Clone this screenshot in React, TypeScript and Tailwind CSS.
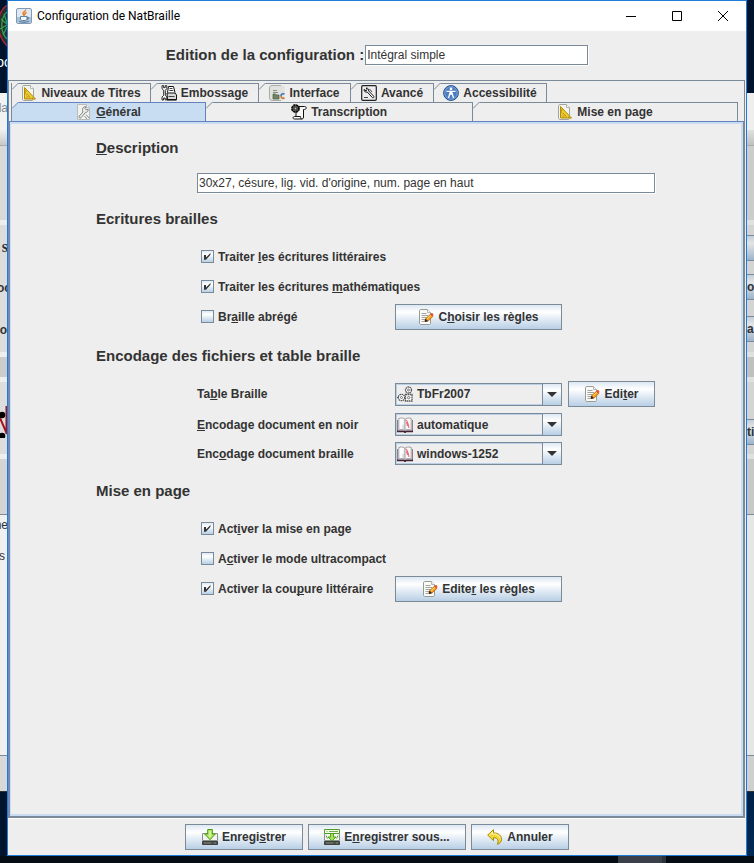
import React from 'react';

type IconProps = { children: React.ReactNode; size?: string };

function Icon({ children, size = 'size-4' }: IconProps) {
  return (
    <svg viewBox="0 0 16 16" className={`${size} shrink-0`} fill="none" aria-hidden="true">
      {children}
    </svg>
  );
}

const JavaIcon = () => (
  <Icon>
    <rect x="0.5" y="0.5" width="15" height="15" rx="1.5" fill="#dfe9f3" stroke="#7f9ab5" />
    <path d="M1 9h14v5.500H1z" fill="#a9c0d6" />
    <path d="M9.500 1.500c1 1.500-3 2.500-2.500 4 .3 1 1 1.300 1 2.500M10.500 4.500c-2 .8-2 1.500-1.300 2.500" stroke="#ee7a1c" strokeWidth="1.400" />
    <path d="M4.500 8.500h6.500v2.500c0 1-1 1.500-2 1.500H6.500c-1 0-2-.5-2-1.500z" fill="#f6f9fc" stroke="#40688f" strokeWidth="0.800" />
    <path d="M11 9.300c2.500-.5 2 1.800-.3 1.900M3 13.600c3 .9 7 .9 10 0" stroke="#40688f" strokeWidth="0.900" />
  </Icon>
);

const SetSquareIcon = () => (
  <Icon>
    <path d="M1.500 2c0-.8.500-1.500 1.500-1.500h6.500l3 3V14c0 1-.5 1.500-1.500 1.500H3c-1 0-1.500-.5-1.500-1.500z" fill="#f4f4ee" stroke="#a3a69d" />
    <path d="M9.500 .5v3h3" fill="#fff" stroke="#b5b7b0" />
    <path d="M3.500 2.500v11.500h11z" fill="#edcd30" stroke="#b48b08" />
    <path d="M6 9v2.700h2.800z" fill="#fff8d0" stroke="#b48b08" strokeWidth="0.800" />
    <path d="M4 6h1.500M4 8h1M6 13.700v-1M9 13.700v-1M11.500 13.700v-1" stroke="#8c6c07" strokeWidth="0.800" />
  </Icon>
);

const WrenchPageIcon = () => (
  <Icon>
    <path d="M1.500 .5h9l3 3v12h-12z" fill="#f1f1ee" stroke="#bbbcb8" />
    <path d="M10.500 .5v3h3" fill="#fff" stroke="#bbbcb8" />
    <path d="M6.500 5.500c0-2 2-3.300 3.800-2.700L9 4.500l1.200 1.400 2-.7c.3 1.800-1 3.300-2.700 3.200L5 13.700c-1 1-2.700-.3-1.800-1.600L7 8c-.4-.8-.5-1.500-.5-2.500z" fill="#eceeee" stroke="#717676" strokeWidth="0.900" />
    <path d="M10 10.500l3.500 4M8.500 12l2.500 3" stroke="#8a8d8c" />
  </Icon>
);

const PrinterIcon = () => (
  <Icon>
    <path d="M6.500 7.500l1-6h5l1.500 6" fill="#fff" stroke="#111" />
    <path d="M8.500 3.500h3M8.300 5.500h4" stroke="#111" strokeWidth="0.800" />
    <path d="M6 8h8l1.500 2v4.500h-9z" fill="#d8d8d8" stroke="#111" />
    <path d="M6 14.800h9.500" stroke="#111" strokeWidth="1.600" />
    <path d="M7.500 11.500h6" stroke="#333" strokeWidth="0.900" />
    <path d="M1 .7v3l1.700 1.600v5L1 12v3h1.600v-2h1.600v2h1.600v-3l-1.500-1.700v-5L5.800 3.700v-3H4.200v2H2.600v-2z" fill="#fff" stroke="#111" strokeWidth="0.900" />
  </Icon>
);

const InterfaceIcon = () => (
  <Icon>
    <rect x="0.5" y="0.500" width="15" height="15" rx="2.500" fill="#e0e2de" />
    <path d="M12 .5H3C1.500.5.500 1.500.500 3v10c0 1.500 1 2.500 2.500 2.500h9" stroke="#aaada7" />
    <path d="M4 5.500h4M4 7.500h5" stroke="#868b84" />
    <path d="M4 9h2.500l1 1h2.500v4H4z" fill="#728268" stroke="#56644d" strokeWidth="0.800" />
    <path d="M15.500 9c-2.500-1-3.500.5-3.500 2" stroke="#3c6dbb" strokeWidth="1.500" />
    <path d="M12 11c0 2.300 2 2.800 3.500 1.800" stroke="#d66a20" strokeWidth="1.500" />
  </Icon>
);

const AdvancedIcon = () => (
  <Icon>
    <rect x="0.700" y="0.700" width="14.600" height="14.600" rx="1" fill="#ededed" stroke="#222" strokeWidth="1.200" />
    <path d="M3 4.500c0 2.200 1.600 3 3.300 2.500l5 5.500c.8.9 2.200-.2 1.400-1.300L7.700 6c.3-1.700-.7-3-2.500-3l1 1.800-1 1z" fill="#fff" stroke="#111" strokeWidth="1" />
    <path d="M8.500 4l2.500 3M3 12.500h4" stroke="#444" />
  </Icon>
);

const AccessibilityIcon = () => (
  <Icon>
    <circle cx="8" cy="8" r="7.400" fill="#4b7ec1" stroke="#274f8c" />
    <circle cx="8" cy="8" r="6.300" stroke="#8eb1df" strokeWidth="0.700" />
    <circle cx="8" cy="3.900" r="1.300" fill="#fff" />
    <path d="M3.500 6.300h9M7 8l-1.500 5M9 8l1.500 5" stroke="#fff" strokeWidth="1.300" />
    <path d="M6.600 6.500h2.800v3.300H6.600z" fill="#fff" />
  </Icon>
);

const TranscriptionIcon = () => (
  <Icon>
    <path d="M6 2.500h7.500c2.500 0 2 3 0 3h-1v7.500c0 1.800-1 2-2 2H3.500c-2 0-1.800-2.500 0-2.500H5v-5" fill="#f7f7f7" stroke="#111" />
    <path d="M5 12.500h4.500c0 1.500.5 2.500 1.500 2.500" stroke="#111" />
    <circle cx="4.500" cy="4.500" r="3.300" fill="#8c8c86" stroke="#111" strokeWidth="2.200" strokeDasharray="2.200 .4" />
    <circle cx="4.500" cy="4.500" r="1.300" fill="#c2c2bc" stroke="#111" strokeWidth="0.800" />
  </Icon>
);

const EditIcon = () => (
  <Icon>
    <path d="M1.500 2c0-1 .5-1.500 1.500-1.500h6.500l3 3V14c0 1-.5 1.500-1.500 1.500H3c-1 0-1.500-.5-1.500-1.500z" fill="#fafaf8" stroke="#979b94" />
    <path d="M9.500.5v3h3" fill="#fff" stroke="#b3b5b0" />
    <path d="M3.500 4.500h5M3.500 6.500h6.500M3.500 8.500h5M3.500 10.500h3.500M3.500 12.500h3" stroke="#a1a49d" />
    <path d="M7 12.500l.8-3 4.700-4.300 2.300 2.300-4.700 4.500z" fill="#fba125" stroke="#b35c00" strokeWidth="0.800" />
    <path d="M12.200 5.300l1-1c1-.7 2.600.8 2 2l-1 1.200z" fill="#e95030" />
    <path d="M7 12.500l.6-2.300 1.800 1.700z" fill="#222" stroke="#222" strokeWidth="0.700" />
    <path d="M9 9.800l4-3.700" stroke="#ffe071" strokeWidth="0.900" />
  </Icon>
);

const CogsIcon = () => (
  <Icon>
    <g stroke="#555">
      <circle cx="11.500" cy="4" r="3" strokeDasharray="1.600 .5" strokeWidth="1.300" fill="#fff" />
      <circle cx="11.500" cy="4" r="1" strokeWidth="0.800" />
      <circle cx="4.500" cy="11.500" r="3.200" strokeDasharray="1.600 .5" strokeWidth="1.300" fill="#fff" />
      <circle cx="4.500" cy="11.500" r="1" strokeWidth="0.800" />
      <rect x="8.500" y="8.500" width="6.500" height="6.500" strokeDasharray="1.600 .5" strokeWidth="1.300" fill="#fff" />
      <circle cx="11.700" cy="11.700" r="1.200" strokeWidth="0.800" />
      <path d="M0 11.500h1.500" />
    </g>
  </Icon>
);

const BookIcon = () => (
  <Icon>
    <path d="M.5 3v11.500h6.500l1 1 1-1h6.500V3" fill="#f4f0f2" stroke="#8a7f8a" />
    <path d="M0 14.300h6.800l1.200.9 1.200-.9H16" stroke="#3f2438" strokeWidth="1.700" />
    <path d="M1.800 1.500c2.700-1 5.200-.5 6.200 1v11c-1.500-1.200-4.200-1.300-6.200-.5z" fill="#fff" stroke="#8f8890" strokeWidth="0.800" />
    <path d="M14.200 1.500c-2.700-1-5.200-.5-6.200 1v11c1.500-1.200 4.200-1.300 6.200-.5z" fill="#fbf8f8" stroke="#8f8890" strokeWidth="0.800" />
    <path d="M7.300 3.500v9M6 8v4" stroke="#c2bfc3" strokeWidth="0.900" />
    <path d="M8.700 3c2 1 2.700 4 3.200 8M9.500 5c.3 1.500.5 3 1.200 4" stroke="#e4707a" strokeWidth="1.100" />
  </Icon>
);

const DriveBase = () => (
  <>
    <path d="M.5 4.500h15v7H.5z" fill="#f3f4f1" stroke="#8c9088" />
    <path d="M.5 12.500h15v3H.5z" fill="#4d524d" stroke="#3c403c" />
    <path d="M2 14h7M12 14h2" stroke="#858a82" strokeWidth="0.900" />
  </>
);

const SaveIcon = () => (
  <Icon>
    <DriveBase />
    <path d="M5.700.5h4.600v4.500h3L8 10.700 2.700 5h3z" fill="#b4e866" stroke="#469b10" />
    <path d="M8 2v6" stroke="#e4f9c4" strokeWidth="1.200" />
  </Icon>
);

const SaveAsIcon = () => (
  <Icon>
    <DriveBase />
    <path d="M.5.500h15v4H.5z" fill="#f6fcf0" stroke="#4d9b22" />
    <path d="M2.500 2.500h1M5 2.500h9" stroke="#72a950" />
    <path d="M6.500 4.500h3v3.500h2.500L8 12 4 8h2.500z" fill="#a9e05c" stroke="#469b10" strokeWidth="0.900" />
    <path d="M2 6.500l1.500 3M14 6.500l-1.500 3" stroke="#5d9a3b" />
  </Icon>
);

const UndoIcon = () => (
  <Icon>
    <path d="M.7 6L6.500.7v3.200c5 0 8 2.800 8 6.300 0 2.600-1.700 4.500-4.200 5.100 1.600-2.900 1.200-6.600-3.800-6.600v3z" fill="#f1d93a" stroke="#a98a07" />
    <path d="M2.300 6l3.200-3v1.900c4 0 7 1.300 7.800 4.500" stroke="#fff8b8" strokeWidth="0.900" />
  </Icon>
);

/* Mnemonic: the letter after "_" is underlined. */
function Mn({ text }: { text: string }) {
  const i = text.indexOf('_');
  if (i < 0) return <span className="whitespace-nowrap">{text}</span>;
  return (
    <span className="whitespace-nowrap">
      {text.slice(0, i)}
      <span className="underline decoration-1 underline-offset-1 [text-decoration-skip-ink:none]">{text[i + 1]}</span>
      {text.slice(i + 2)}
    </span>
  );
}

function MetalButton({ icon, text, width }: { icon: React.ReactNode; text: string; width: string }) {
  return (
    <button
      type="button"
      className={`${width} flex h-[26px] items-center justify-center gap-1 border border-[#7a8a99] bg-linear-to-b from-[#dde8f3] via-white via-30% to-[#b8cfe5]`}
    >
      {icon}
      <Mn text={text} />
    </button>
  );
}

function Tab({ icon, text, width, selected = false }: { icon: React.ReactNode; text: string; width: string; selected?: boolean }) {
  return (
    <button
      type="button"
      role="tab"
      aria-selected={selected}
      className={`${width} relative flex h-[19px] items-center justify-center gap-1 border-t border-r ${
        selected ? 'border-[#6382bf] bg-[#c8ddf2]' : 'border-[#7a8a99]'
      }`}
    >
      <svg viewBox="0 0 7 7" className="absolute -top-px left-0 size-[7px]" aria-hidden="true">
        <path d="M0 0h7L0 7z" fill="#eeeeee" />
        <path d="M0 6.500L6.500 0" stroke={selected ? '#6382bf' : '#7a8a99'} fill="none" />
      </svg>
      {icon}
      <Mn text={text} />
    </button>
  );
}

function Check({ text, checked = false }: { text: string; checked?: boolean }) {
  return (
    <label className="flex h-[26px] items-center gap-1 pb-px pl-1">
      <span className="relative flex size-[13px] shrink-0">
        <input
          type="checkbox"
          defaultChecked={checked}
          className="peer size-[13px] appearance-none border border-[#7a8a99] bg-linear-to-b from-[#dde8f3] via-white via-30% to-[#b8cfe5]"
        />
        <svg viewBox="0 0 13 13" className="pointer-events-none absolute inset-0 hidden size-[13px] peer-checked:block" aria-hidden="true">
          <path d="M3 5h2v2.500L9.500 3v1.800L5 9.800H3z" fill="#333" />
        </svg>
      </span>
      <Mn text={text} />
    </label>
  );
}

function Combo({ id, icon, value }: { id: string; icon: React.ReactNode; value: string }) {
  return (
    <div className="flex h-[23px] border border-[#7a8a99]">
      <div className="flex flex-1 items-center gap-1 border-t border-b border-l border-[#b8cfe5]">
        {icon}
        <select id={id} defaultValue={value} className="h-full min-w-0 flex-1 appearance-none bg-transparent font-bold outline-none">
          <option>{value}</option>
        </select>
      </div>
      <span className="pointer-events-none flex w-[19px] items-center justify-center border-l border-[#7a8a99] bg-linear-to-b from-[#dde8f3] via-white via-30% to-[#b8cfe5]">
        <svg viewBox="0 0 10 5" className="h-[5px] w-[10px]" aria-hidden="true">
          <path d="M0 0h10L5 5z" fill="#333" />
        </svg>
      </span>
    </div>
  );
}

const Heading = ({ text }: { text: string }) => (
  <h2 className="text-[15px] leading-5">
    <Mn text={text} />
  </h2>
);

/* Narrow view of the windows that lie behind the dialog, on its left. */
function LeftStrip() {
  return (
    <div aria-hidden="true" className="flex w-[7px] shrink-0 flex-col overflow-hidden bg-[#00152d] font-normal">
      <div className="flex h-[93px] flex-col items-end">
        <svg viewBox="0 0 7 48" className="h-12 w-[7px]">
          <path d="M7 5C-3 12-6 32 7 46" fill="#2b2d30" stroke="#a32830" strokeWidth="1.500" />
          <path d="M7 12C0 18 0 32 7 39M1 19l6 5M0 29l7-4M4 14l3 9M3 35l4-8" fill="none" stroke="#2fa24a" strokeWidth="1.300" />
        </svg>
        <span className="-mr-1 mt-1 text-sm leading-5 text-white">oc</span>
      </div>
      <div className="flex h-[37px] items-center justify-end bg-[#f2f2f2] pb-2 text-[#888]"><span className="-mr-px">la</span></div>
      <div className="h-[16px] border-b border-[#aaa] bg-linear-to-b from-[#f0f0f0] to-[#c8c8c8]" />
      <div className="h-[74px] bg-[#d9d9d9]" />
      <div className="h-[5px] bg-[#eeeeee]" />
      <div className="flex h-[127px] flex-col items-end bg-[#dcdcdc] pt-3 font-bold">
        <span className="-mr-px h-[41px] font-['Liberation_Serif',serif] text-base leading-5">s</span>
        <span className="-mr-1 h-[42px] leading-5">oc</span>
        <span className="leading-5">o</span>
      </div>
      <div className="h-[5px] bg-[#eeeeee]" />
      <div className="h-[20px] bg-[#cccccc]" />
      <div className="h-[5px] bg-[#eeeeee]" />
      <div className="h-[72px] bg-[#dddddd] pt-6">
        <svg viewBox="0 0 7 32" className="h-8 w-[7px]">
          <path d="M0 12l7 16M6.500 0v28" stroke="#a51418" strokeWidth="2" />
          <circle cx="2" cy="9" r="3.300" fill="#000" />
          <circle cx="2" cy="30" r="3.300" fill="#000" />
        </svg>
      </div>
      <div className="h-[5px] bg-[#eeeeee]" />
      <div className="h-[56px] border-b border-[#7a8a99] bg-[#d4d4d4]" />
      <div className="flex h-[240px] flex-col items-end bg-[#f0f0f0]">
        <span className="-mr-px h-[31px] leading-5">ne</span>
        <span className="pr-0.5 leading-5">s</span>
      </div>
      <div className="h-[37px] border-t border-b border-t-[#7a8a99] border-b-[#333] bg-[#d8d8d8]" />
    </div>
  );
}

const SideButton = ({ text, gap }: { text: string; gap: string }) => (
  <div className={`${gap} flex h-[26px] shrink-0 items-center overflow-hidden border-t border-b border-[#7a8a99] bg-linear-to-b from-[#c4ced8] via-[#e4e4e4] via-30% to-[#9fb4c9]`}>
    {text}
  </div>
);

function RightStrip() {
  return (
    <div aria-hidden="true" className="flex w-[7px] shrink-0 flex-col overflow-hidden bg-linear-to-b from-[#00152d] from-80% to-[#002a55]">
      <div className="h-[93px]" />
      <div className="h-[37px] bg-[#eeeeee]" />
      <div className="h-[16px] border-b border-[#aaa] bg-linear-to-b from-[#e0e0e0] to-[#c0c0c0]" />
      <div className="h-[74px] bg-[#cccccc]" />
      <div className="h-[5px] bg-[#e0e0e0]" />
      <div className="h-[127px] bg-[#d4d4d4] pt-[10px]">
        <SideButton text="" gap="mt-0" />
        <SideButton text="o" gap="mt-[13px]" />
        <SideButton text="a" gap="mt-4" />
      </div>
      <div className="h-[5px] bg-[#e0e0e0]" />
      <div className="h-[20px] bg-[#c0c0c0]" />
      <div className="h-[5px] bg-[#e0e0e0]" />
      <div className="h-[72px] bg-[#d4d4d4] pt-[37px]">
        <SideButton text="ti" gap="mt-0" />
      </div>
      <div className="h-[5px] bg-[#e0e0e0]" />
      <div className="h-[56px] border-b border-[#7a8a99] bg-[#c8c8c8]" />
      <div className="h-[240px] bg-[#e6e6e6]" />
      <div className="h-[37px] border-t border-b border-t-[#7a8a99] border-b-[#333] bg-[#cfcfcf]" />
    </div>
  );
}

export default function App() {
  return (
    <div className="flex min-h-screen flex-col bg-[#060c14] font-['Liberation_Sans',Arial,sans-serif] text-xs font-bold text-[#333333]">
      <div className="flex flex-1">
        <LeftStrip />
        <main className="flex min-w-0 flex-1 flex-col border border-[#1c7cd6] bg-[#eeeeee]">
          <header className="flex h-[30px] items-center bg-white pl-2 text-black">
            <JavaIcon />
            <h1 className="flex-1 pl-[5px] font-[Roboto,sans-serif] text-xs font-normal">Configuration de NatBraille</h1>
            <button type="button" aria-label="Réduire" className="flex h-full w-[46px] items-center justify-center">
              <svg viewBox="0 0 10 10" className="size-[10px]"><path d="M0 5.500h10" stroke="#000" /></svg>
            </button>
            <button type="button" aria-label="Agrandir" className="flex h-full w-[46px] items-center justify-center">
              <svg viewBox="0 0 10 10" className="size-[10px]"><path d="M.5.500h9v9h-9z" fill="none" stroke="#000" /></svg>
            </button>
            <button type="button" aria-label="Fermer" className="flex h-full w-[46px] items-center justify-center">
              <svg viewBox="0 0 10 10" className="size-[10px]"><path d="M0 0l10 10M10 0L0 10" stroke="#000" /></svg>
            </button>
          </header>

          <div className="flex items-center justify-center gap-px pt-[14px] pb-[15px]">
            <label htmlFor="nom" className="text-[15px] leading-5">Edition de la configuration :</label>
            <input
              id="nom"
              defaultValue="Intégral simple"
              className="h-5 w-[223px] border border-[#7a8a99] bg-white px-px text-xs font-normal shadow-[1px_1px_0_#fff] outline-none"
            />
          </div>

          <div className="mr-px flex flex-1 flex-col border-b border-white">
            <div role="tablist" className="border-t border-r border-l border-[#7a8a99] pt-[2px] pr-[6px] pl-[2px]">
              <div className="flex border-l border-[#7a8a99]">
                <Tab icon={<SetSquareIcon />} text="Niveaux de Titres" width="w-[139px]" />
                <Tab icon={<PrinterIcon />} text="Embossage" width="w-[108px]" />
                <Tab icon={<InterfaceIcon />} text="Interface" width="w-[92px]" />
                <Tab icon={<AdvancedIcon />} text="Avancé" width="w-[83px]" />
                <Tab icon={<AccessibilityIcon />} text="Accessibilité" width="w-[113px]" />
              </div>
              <div className="flex border-l border-[#7a8a99]">
                <Tab icon={<WrenchPageIcon />} text="_Général" width="flex-[194]" selected />
                <Tab icon={<TranscriptionIcon />} text="Transcription" width="flex-[267]" />
                <Tab icon={<SetSquareIcon />} text="Mise en page" width="flex-[265]" />
              </div>
            </div>

            <div role="tabpanel" className="flex-1 border-t border-r-2 border-b-2 border-l-2 border-[#7a8a99] border-t-[#6382bf] border-l-[#6f8ab4]">
              <div className="h-full border-t-2 border-r-2 border-b-2 border-l border-[#c8ddf2] pt-[14px]">
                <div className="mx-auto max-w-[560px] pr-px">
                  <Heading text="_Description" />
                  <div className="mt-[15px] pl-[101px]">
                    <input
                      aria-label="Description"
                      defaultValue="30x27, césure, lig. vid. d'origine, num. page en haut"
                      className="block h-5 w-full border border-[#7a8a99] bg-white px-px text-xs font-normal shadow-[1px_1px_0_#fff] outline-none"
                    />
                  </div>

                  <div className="mt-4"><Heading text="Ecritures brailles" /></div>
                  <div className="mt-[15px] flex flex-col gap-1 pl-[101px]">
                    <Check text="Traiter _les écritures littéraires" checked />
                    <Check text="Traiter les écritures _mathématiques" checked />
                    <div className="grid grid-cols-[198px_167px]">
                      <Check text="Br_aille abrégé" />
                      <MetalButton icon={<EditIcon />} text="C_hoisir les règles" width="w-full" />
                    </div>
                  </div>

                  <div className="mt-4"><Heading text="Encodage des fichiers et table braille" /></div>
                  <div className="mt-[15px] flex flex-col gap-[6px] pl-[101px]">
                    <div className="grid grid-cols-[198px_167px_6px_87px] items-center">
                      <label htmlFor="table"><Mn text="Ta_ble Braille" /></label>
                      <Combo id="table" icon={<CogsIcon />} value="TbFr2007" />
                      <span />
                      <MetalButton icon={<EditIcon />} text="Edi_ter" width="w-full" />
                    </div>
                    <div className="grid grid-cols-[198px_167px] items-center">
                      <label htmlFor="noir"><Mn text="_Encodage document en noir" /></label>
                      <Combo id="noir" icon={<BookIcon />} value="automatique" />
                    </div>
                    <div className="grid grid-cols-[198px_167px] items-center">
                      <label htmlFor="braille"><Mn text="Enc_odage document braille" /></label>
                      <Combo id="braille" icon={<BookIcon />} value="windows-1252" />
                    </div>
                  </div>

                  <div className="mt-4"><Heading text="Mise en page" /></div>
                  <div className="mt-[15px] flex flex-col gap-1 pl-[101px]">
                    <Check text="Act_iver la mise en page" checked />
                    <Check text="A_ctiver le mode ultracompact" />
                    <div className="grid grid-cols-[198px_167px]">
                      <Check text="Activer la cou_pure littéraire" checked />
                      <MetalButton icon={<EditIcon />} text="Edite_r les règles" width="w-full" />
                    </div>
                  </div>
                </div>
              </div>
            </div>
          </div>

          <footer className="flex justify-center gap-[5px] py-[5px]">
            <MetalButton icon={<SaveIcon />} text="Enregi_strer" width="w-[118px]" />
            <MetalButton icon={<SaveAsIcon />} text="E_nregistrer sous..." width="w-[158px]" />
            <MetalButton icon={<UndoIcon />} text="Annuler" width="w-[98px]" />
          </footer>
        </main>
        <RightStrip />
      </div>
      <div className="flex h-[7px] justify-end pr-[88px]">
        <div className="w-12 border-r-4 border-[#2c323a] bg-[#3b3f49]" />
      </div>
    </div>
  );
}
